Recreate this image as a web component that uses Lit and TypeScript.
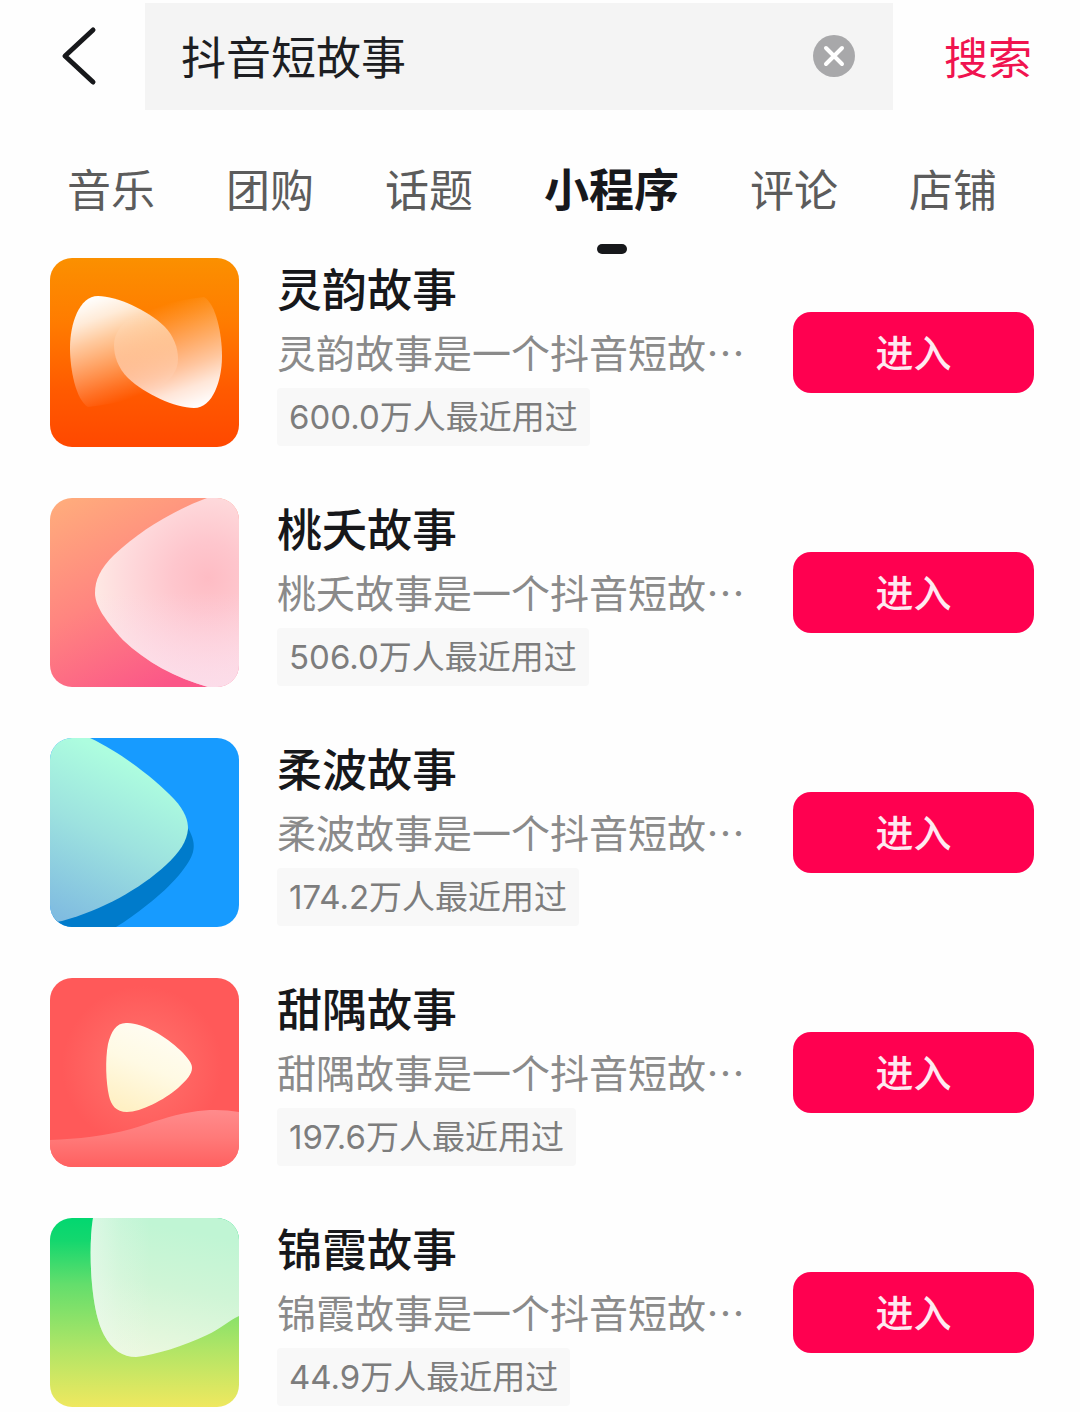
import { LitElement, html, css, svg } from "lit";
import { customElement, property, state } from "lit/decorators.js";
import { classMap } from "lit/directives/class-map.js";

interface MiniApp {
  name: string;
  users: string;
  art: string;
}

const TABS = ["音乐", "团购", "话题", "小程序", "评论", "店铺"];

const APPS: MiniApp[] = [
  { name: "灵韵故事", users: "600.0万", art: "ribbon" },
  { name: "桃夭故事", users: "506.0万", art: "petal" },
  { name: "柔波故事", users: "174.2万", art: "wave" },
  { name: "甜隅故事", users: "197.6万", art: "play" },
  { name: "锦霞故事", users: "44.9万", art: "meadow" },
];

const ART: Record<string, unknown> = {
  ribbon: svg`
    <defs>
      <linearGradient id="bg" x1="0" y1="0" x2="0" y2="1">
        <stop offset="0" stop-color="#fb9000" /><stop offset=".35" stop-color="#ff7b00" />
        <stop offset=".7" stop-color="#ff5a00" /><stop offset="1" stop-color="#ff4800" />
      </linearGradient>
      <linearGradient id="leaf" gradientUnits="userSpaceOnUse" x1="45" y1="38" x2="82" y2="140">
        <stop offset="0" stop-color="#fff" /><stop offset=".2" stop-color="#fff" stop-opacity=".85" />
        <stop offset=".39" stop-color="#fff" stop-opacity=".62" /><stop offset=".6" stop-color="#fff" stop-opacity=".4" />
        <stop offset=".85" stop-color="#fff" stop-opacity=".14" /><stop offset="1" stop-color="#fff" stop-opacity="0" />
      </linearGradient>
    </defs>
    <rect width="189" height="189" fill="url(#bg)" />
    <path fill="url(#leaf)" d="M38 149C26 142 20 112 20 90C20 66 29 38 48 38C67 38 97 52 114 68C124 78 128 90 128 101C128 124 100 142 38 149Z" />
    <path fill="url(#leaf)" transform="rotate(180 96 94)" d="M38 149C26 142 20 112 20 90C20 66 29 38 48 38C67 38 97 52 114 68C124 78 128 90 128 101C128 124 100 142 38 149Z" />`,
  petal: svg`
    <defs>
      <linearGradient id="bg" x1=".1" y1="0" x2=".6" y2="1">
        <stop offset="0" stop-color="#ffab7c" /><stop offset=".5" stop-color="#ff8580" />
        <stop offset="1" stop-color="#fb5688" />
      </linearGradient>
      <radialGradient id="pt" gradientUnits="userSpaceOnUse" cx="158" cy="80" r="118">
        <stop offset="0" stop-color="#febcc4" /><stop offset=".3" stop-color="#fec6cd" />
        <stop offset=".7" stop-color="#fedadc" /><stop offset="1" stop-color="#feebe5" />
      </radialGradient>
      <linearGradient id="lo" x1="0" y1="0" x2="0" y2="1">
        <stop offset=".5" stop-color="#fbd3ec" stop-opacity="0" /><stop offset="1" stop-color="#fbd8ec" stop-opacity=".7" />
      </linearGradient>
    </defs>
    <rect width="189" height="189" fill="url(#bg)" />
    <path fill="url(#pt)" d="M157 0C122 13 88 34 64 57C50 71 45 82 45 95C45 107 54 121 73 142C96 164 126 180 158 189H189V0Z" />
    <path fill="url(#lo)" d="M157 0C122 13 88 34 64 57C50 71 45 82 45 95C45 107 54 121 73 142C96 164 126 180 158 189H189V0Z" />`,
  wave: svg`
    <defs>
      <linearGradient id="sea" gradientUnits="userSpaceOnUse" x1="90" y1="30" x2="16" y2="182">
        <stop offset="0" stop-color="#adfddf" /><stop offset=".45" stop-color="#9de2df" />
        <stop offset="1" stop-color="#80bce0" />
      </linearGradient>
    </defs>
    <rect width="189" height="189" fill="#179bff" />
    <path fill="#007bcb" d="M138 90C143 99 145 106 143 114C140 126 122 148 97 167C87 175 76 183 66 189H0V180Z" />
    <path fill="url(#sea)" d="M0 0H40C70 14 104 40 124 61C135 73 138 82 138 91C137 103 130 114 116 127C90 151 52 172 12 183L0 185Z" />`,
  play: svg`
    <defs>
      <radialGradient id="glow" gradientUnits="userSpaceOnUse" cx="92" cy="88" r="80">
        <stop offset="0" stop-color="#ff7c75" /><stop offset=".5" stop-color="#ff6764" />
        <stop offset="1" stop-color="#ff5959" />
      </radialGradient>
      <linearGradient id="hill" x1="0" y1="0" x2="0" y2="1">
        <stop offset="0" stop-color="#ff8b8c" /><stop offset=".5" stop-color="#ff7978" />
        <stop offset="1" stop-color="#ff6060" />
      </linearGradient>
      <linearGradient id="cream" x1=".7" y1="0" x2=".3" y2="1">
        <stop offset="0" stop-color="#fffdf5" /><stop offset=".5" stop-color="#fffae4" />
        <stop offset="1" stop-color="#fff0c4" />
      </linearGradient>
    </defs>
    <rect width="189" height="189" fill="url(#glow)" />
    <path fill="url(#hill)" d="M0 162C28 161 55 158 81 151C104 144 118 138 142 134C160 131 176 132 189 134V189H0Z" />
    <path fill="url(#cream)" d="M76 45C92 44 117 59 130 72C138 80 142 85 142 90C142 96 137 102 128 110C114 122 91 134 77 134C66 134 61 127 59 118C56 104 55 82 58 66C61 54 66 45 76 45Z" />`,
  meadow: svg`
    <defs>
      <linearGradient id="bg" x1="0" y1="0" x2="0" y2="1">
        <stop offset="0" stop-color="#02d770" /><stop offset=".12" stop-color="#14d76e" />
        <stop offset=".35" stop-color="#63de6c" /><stop offset=".7" stop-color="#b2e566" />
        <stop offset="1" stop-color="#efe85f" />
      </linearGradient>
      <linearGradient id="mist" gradientUnits="userSpaceOnUse" x1="125" y1="10" x2="100" y2="138">
        <stop offset="0" stop-color="#c0f5d4" /><stop offset=".45" stop-color="#cff5d6" />
        <stop offset="1" stop-color="#ebf8df" />
      </linearGradient>
      <linearGradient id="rim" gradientUnits="userSpaceOnUse" x1="40" y1="0" x2="100" y2="0">
        <stop offset="0" stop-color="#eefaf0" stop-opacity=".6" /><stop offset=".5" stop-color="#eefaf0" stop-opacity=".2" />
        <stop offset="1" stop-color="#eefaf0" stop-opacity="0" />
      </linearGradient>
    </defs>
    <rect width="189" height="189" fill="url(#bg)" />
    <path fill="url(#mist)" d="M43 0C40 18 40 44 42 66C44 88 48 106 54 117C62 132 73 139 86 139C105 137 134 128 157 117C170 111 178 103 189 98V0Z" />
    <path fill="url(#rim)" d="M43 0C40 18 40 44 42 66C44 88 48 106 54 117C62 132 73 139 86 139C105 137 134 128 157 117C170 111 178 103 189 98V0Z" />`,
};

@customElement("search-bar")
class SearchBar extends LitElement {
  @state() private query = "抖音短故事";

  static styles = css`
    :host {
      display: flex;
      align-items: stretch;
      padding-top: 3px;
    }
    button {
      border: 0;
      padding: 0;
      background: none;
      font: inherit;
      cursor: pointer;
      display: flex;
      align-items: center;
    }
    .back {
      width: 145px;
      padding-left: 60px;
    }
    .field {
      flex: 1;
      min-width: 0;
      display: flex;
      align-items: center;
      height: 107px;
      padding: 0 37px 2px 36px;
      background: #f4f4f4;
      box-sizing: border-box;
    }
    input {
      flex: 1;
      min-width: 0;
      height: 64px;
      padding: 0;
      border: 0;
      outline: 0;
      background: none;
      font: inherit;
      font-size: 45px;
      color: #1d1e22;
      box-sizing: border-box;
    }
    .submit {
      padding: 0 48px 2px 51px;
      font-size: 44px;
      color: #f0134f;
    }
    svg {
      display: block;
    }
  `;

  render() {
    return html`
      <button class="back" aria-label="返回">
        <svg width="40" height="64" viewBox="0 0 40 64" fill="none" stroke="#17181b" stroke-width="5" stroke-linecap="round" stroke-linejoin="round">
          <path d="M33 5L5 31L33 57" />
        </svg>
      </button>
      <div class="field">
        <input type="text" aria-label="搜索内容" .value=${this.query}
          @input=${(e: Event) => (this.query = (e.target as HTMLInputElement).value)} />
        <button aria-label="清除" @click=${() => (this.query = "")}>
          <svg width="44" height="44" viewBox="0 0 44 44">
            <circle cx="22" cy="22" r="21" fill="#a8a8aa" />
            <path d="M14 14L30 30M30 14L14 30" stroke="#fff" stroke-width="4" stroke-linecap="round" />
          </svg>
        </button>
      </div>
      <button class="submit">搜索</button>
    `;
  }
}

@customElement("mini-app-row")
class MiniAppRow extends LitElement {
  @property({ attribute: false }) app!: MiniApp;

  static styles = css`
    :host {
      display: flex;
      align-items: center;
      gap: 38px;
    }
    .icon {
      flex: none;
      width: 189px;
      height: 189px;
      border-radius: 22px;
    }
    .info {
      flex: 1;
      min-width: 0;
    }
    h2,
    p {
      margin: 0;
      white-space: nowrap;
    }
    h2 {
      font-size: 45px;
      line-height: 56px;
      font-weight: 500;
      color: #17181b;
    }
    p {
      font-size: 39px;
      line-height: 70px;
      color: #8a8a8a;
    }
    .badge {
      display: inline-block;
      vertical-align: top;
      margin-top: 2px;
      padding: 0 12px;
      line-height: 58px;
      font-family: Inter, "Noto Sans CJK SC", sans-serif;
      font-size: 33px;
      white-space: nowrap;
      color: #7d7d7d;
      background: #f8f8f8;
      border-radius: 4px;
    }
    .enter {
      flex: none;
      width: 241px;
      height: 81px;
      padding: 0 0 4px;
      border: 0;
      border-radius: 18px;
      background: #ff0050;
      color: #ffe9f0;
      font: inherit;
      font-size: 38px;
      font-weight: 500;
      cursor: pointer;
    }
  `;

  render() {
    const { name, users, art } = this.app;
    return html`
      <svg class="icon" viewBox="0 0 189 189" aria-hidden="true">${ART[art]}</svg>
      <div class="info">
        <h2>${name}</h2>
        <p>${name}是一个抖音短故…</p>
        <span class="badge">${users}人最近用过</span>
      </div>
      <button class="enter">进入</button>
    `;
  }
}

@customElement("app-root")
class AppRoot extends LitElement {
  @state() private active = "小程序";

  static styles = css`
    :host {
      display: block;
      overflow: hidden;
      background: #fefefe;
      font-family: "Noto Sans CJK SC", sans-serif;
    }
    .tabs {
      display: flex;
      gap: 71px;
      padding: 46px 67px 0;
    }
    .tab {
      display: flex;
      flex-direction: column;
      align-items: center;
      gap: 24px;
      padding: 0;
      border: 0;
      background: none;
      font: inherit;
      font-size: 44px;
      line-height: 64px;
      white-space: nowrap;
      color: #5c5c5c;
      cursor: pointer;
    }
    .tab::after {
      content: "";
      width: 30px;
      height: 10px;
      border-radius: 5px;
    }
    .active {
      font-size: 45px;
      font-weight: 700;
      color: #17181b;
    }
    .active::after {
      background: #17181b;
    }
    .results {
      display: flex;
      flex-direction: column;
      gap: 51px;
      margin: 0;
      padding: 4px 46px 5px 50px;
      list-style: none;
    }
  `;

  render() {
    return html`
      <search-bar></search-bar>
      <nav class="tabs">
        ${TABS.map(
          (t) => html`<button class=${classMap({ tab: true, active: t === this.active })} @click=${() => (this.active = t)}>${t}</button>`,
        )}
      </nav>
      <ul class="results">
        ${APPS.map((a) => html`<li><mini-app-row .app=${a}></mini-app-row></li>`)}
      </ul>
    `;
  }
}
